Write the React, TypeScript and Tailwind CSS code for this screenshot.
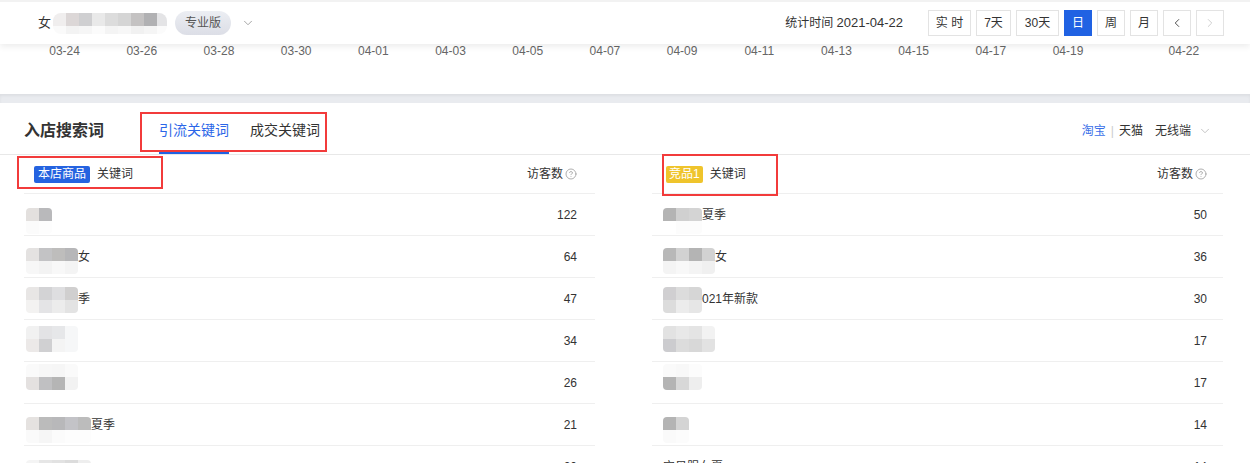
import { ChevronDown, ChevronLeft, ChevronRight, CircleHelp } from "lucide-react";

type Row = {
  top: string[];
  bottom: string[];
  offset: string;
  text: string;
  value: number;
};

const axisDates = [
  "03-24", "03-26", "03-28", "03-30", "04-01", "04-03", "04-05",
  "04-07", "04-09", "04-11", "04-13", "04-15", "04-17", "04-19",
];

const leftRows: Row[] = [
  { top: ["bg-[#e3e0de]", "bg-[#b9b9bb]"], bottom: ["bg-[#fbfbfb]", "bg-[#fdfdfd]"], offset: "mt-[14px]", text: "", value: 122 },
  { top: ["bg-[#e4e2e1]", "bg-[#c3c3c5]", "bg-[#bebdbc]", "bg-[#b6b6b8]"], bottom: ["bg-[#f7f7f7]", "bg-[#f3f3f3]", "bg-[#f8f8f8]", "bg-[#f4f4f4]"], offset: "mt-[12px]", text: "女", value: 64 },
  { top: ["bg-[#e8e6e5]", "bg-[#d3d3d5]", "bg-[#dedee0]", "bg-[#d0cfcf]"], bottom: ["bg-[#f3f2f1]", "bg-[#e4e4e6]", "bg-[#ececec]", "bg-[#e3e3e3]"], offset: "mt-[9px]", text: "季", value: 47 },
  { top: ["bg-[#f1f1f1]", "bg-[#e3e3e5]", "bg-[#e6e7e9]", "bg-[#f6f7f8]"], bottom: ["bg-[#ece9e8]", "bg-[#d0d0d2]", "bg-[#f4f4f4]", "bg-[#f6f7f8]"], offset: "mt-[6px]", text: "", value: 34 },
  { top: ["bg-[#fafafa]", "bg-[#f7f7f7]", "bg-[#f6f6f6]", "bg-[#fafafa]"], bottom: ["bg-[#e4e1e0]", "bg-[#c0c0c2]", "bg-[#b5b5b5]", "bg-[#f2f2f2]"], offset: "mt-[2px]", text: "", value: 26 },
  { top: ["bg-[#e5e2e0]", "bg-[#bbbbbb]", "bg-[#b8b8ba]", "bg-[#c3c3c7]", "bg-[#bcbcbc]"], bottom: ["bg-[#fafafa]", "bg-[#f6f6f6]", "bg-[#fbfbfb]", "bg-[#fdfdfd]", "bg-[#fdfdfd]"], offset: "mt-[13px]", text: "夏季", value: 21 },
  { top: ["bg-[#f4f4f4]", "bg-[#e6e6e6]", "bg-[#e2e2e2]", "bg-[#dcdcdc]", "bg-[#eeeeee]"], bottom: ["bg-[#fafafa]", "bg-[#f6f6f6]", "bg-[#f8f8f8]", "bg-[#fbfbfb]", "bg-[#fdfdfd]"], offset: "mt-[14px]", text: "", value: 20 },
];

const rightRows: Row[] = [
  { top: ["bg-[#b4b4b4]", "bg-[#d0d0d0]", "bg-[#d4d4d4]"], bottom: ["bg-[#ffffff]", "bg-[#fcfcfc]", "bg-[#fcfcfc]"], offset: "mt-[14px]", text: "夏季", value: 50 },
  { top: ["bg-[#b8b8b8]", "bg-[#d2d2d2]", "bg-[#b4b4b4]", "bg-[#d2d2d2]"], bottom: ["bg-[#f4f4f4]", "bg-[#f8f8f8]", "bg-[#f4f4f4]", "bg-[#f0f0f0]"], offset: "mt-[12px]", text: "女", value: 36 },
  { top: ["bg-[#d0cfd1]", "bg-[#dcdcdc]", "bg-[#d6d6d6]"], bottom: ["bg-[#dcdcdc]", "bg-[#ececec]", "bg-[#e6e6e6]"], offset: "mt-[9px]", text: "021年新款", value: 30 },
  { top: ["bg-[#e2e2e2]", "bg-[#e8e8e8]", "bg-[#e4e4e4]", "bg-[#f2f2f2]"], bottom: ["bg-[#cccccf]", "bg-[#dcdcdc]", "bg-[#d8d8d8]", "bg-[#e2e2e2]"], offset: "mt-[6px]", text: "", value: 17 },
  { top: ["bg-[#fafafa]", "bg-[#f8f8f8]", "bg-[#fcfcfc]"], bottom: ["bg-[#b4b4b4]", "bg-[#d8d8d8]", "bg-[#eeeeee]"], offset: "mt-[2px]", text: "", value: 17 },
  { top: ["bg-[#b4b4b4]", "bg-[#d4d4d4]"], bottom: ["bg-[#fafafa]", "bg-[#fcfcfc]"], offset: "mt-[13px]", text: "", value: 14 },
  { top: [], bottom: [], offset: "mt-[14px]", text: "宝贝服女夏", value: 14 },
];

function Pixelated({ top, bottom, offset }: { top: string[]; bottom: string[]; offset: string }) {
  if (top.length === 0) return null;
  return (
    <div className={`self-start ${offset} flex flex-col overflow-hidden rounded-[4px]`}>
      <div className="flex">
        {top.map((c, i) => (
          <span key={i} className={`h-[13px] w-[13px] ${c}`} />
        ))}
      </div>
      <div className="flex">
        {bottom.map((c, i) => (
          <span key={i} className={`h-[13px] w-[13px] ${c}`} />
        ))}
      </div>
    </div>
  );
}

function KeywordTable({
  rows,
  badge,
  left,
}: {
  rows: Row[];
  badge: React.ReactNode;
  left: boolean;
}) {
  return (
    <div className="flex w-[571px] flex-col">
      <div className={`relative flex h-[39px] items-center border-b border-[#efefef] ${left ? "pl-[10px] pr-[18px]" : "pl-[14px] pr-[16px]"}`}>
        {badge}
        <span className="ml-[7px] text-[12px] text-[#333]">关键词</span>
        <span className="ml-auto flex items-center text-[12px] text-[#333]">
          访客数
          <CircleHelp className="ml-[2px] h-[12px] w-[12px] text-[#9a9a9a]" strokeWidth={1.6} />
        </span>
        {left ? (
          <div className="absolute left-[-7px] top-[1px] h-[33px] w-[146px] border-2 border-[#f23b3b]" />
        ) : (
          <div className="absolute left-[10px] top-[-1px] h-[42px] w-[116px] border-2 border-[#f23b3b]" />
        )}
      </div>
      {rows.map((r, i) => (
        <div
          key={i}
          className={`flex h-[42px] items-center border-b border-[#efefef] text-[12px] text-[#333] ${left ? "pl-[2px] pr-[18px]" : "pl-[11px] pr-[16px]"}`}
        >
          <div className="flex h-full items-center">
            <Pixelated top={r.top} bottom={r.bottom} offset={r.offset} />
            <span>{r.text}</span>
          </div>
          <span className="ml-auto">{r.value}</span>
        </div>
      ))}
    </div>
  );
}

export default function App() {
  return (
    <div className="h-[463px] w-[1250px] overflow-hidden bg-white font-[family-name:'Liberation_Sans','Noto_Sans_CJK_SC',sans-serif]">
      {/* top bar */}
      <div className="relative z-10 flex h-[44px] items-center border-t-2 border-[#f2f2f2] bg-white pl-[38px] pr-[26px] shadow-[0_3px_6px_rgba(0,0,0,0.07)]">
        <span className="text-[13px] text-[#333]">女</span>
        <div className="ml-[2px] flex flex-col overflow-hidden rounded-[8px]">
          <div className="flex">
            <span className="h-[13px] w-[13px] bg-[#f0eeee]" />
            <span className="h-[13px] w-[13px] bg-[#dcd7d7]" />
            <span className="h-[13px] w-[13px] bg-[#cfcfd1]" />
            <span className="h-[13px] w-[13px] bg-[#e9e9e9]" />
            <span className="h-[13px] w-[13px] bg-[#dcdcdc]" />
            <span className="h-[13px] w-[13px] bg-[#d5d5d5]" />
            <span className="h-[13px] w-[13px] bg-[#c4c2c2]" />
            <span className="h-[13px] w-[13px] bg-[#b1b1b3]" />
            <span className="h-[13px] w-[10px] bg-[#e4e4e6]" />
          </div>
          <div className="flex">
            <span className="h-[8px] w-[13px] bg-[#fafafa]" />
            <span className="h-[8px] w-[13px] bg-[#f3f3f3]" />
            <span className="h-[8px] w-[13px] bg-[#f6f6f6]" />
            <span className="h-[8px] w-[13px] bg-[#fbfbfb]" />
            <span className="h-[8px] w-[13px] bg-[#f4f4f4]" />
            <span className="h-[8px] w-[13px] bg-[#f7f7f7]" />
            <span className="h-[8px] w-[13px] bg-[#f1f1f1]" />
            <span className="h-[8px] w-[13px] bg-[#f5f5f5]" />
            <span className="h-[8px] w-[10px] bg-[#fbfbfb]" />
          </div>
        </div>
        <span className="ml-[8px] flex h-[24px] w-[56px] items-center justify-center rounded-full bg-gradient-to-b from-[#eceef3] to-[#dcdee6] text-[12px] text-[#555]">
          专业版
        </span>
        <ChevronDown className="ml-[10px] h-[14px] w-[14px] text-[#999]" strokeWidth={1.5} />

        <div className="ml-auto flex items-center">
          <span className="mr-[25px] text-[12px] text-[#333]">
            统计时间 <span className="text-[13px]">2021-04-22</span>
          </span>
          <div className="flex gap-[5px] text-[12px] text-[#333]">
            <button className="h-[26px] w-[43px] border border-[#e3e3e3] bg-white">实 时</button>
            <button className="h-[26px] w-[35px] border border-[#e3e3e3] bg-white">7天</button>
            <button className="h-[26px] w-[43px] border border-[#e3e3e3] bg-white">30天</button>
            <button className="h-[26px] w-[28px] border border-[#2062e3] bg-[#2062e3] text-white">日</button>
            <button className="h-[26px] w-[28px] border border-[#e3e3e3] bg-white">周</button>
            <button className="h-[26px] w-[28px] border border-[#e3e3e3] bg-white">月</button>
            <button className="flex h-[26px] w-[28px] items-center justify-center border border-[#e3e3e3] bg-white">
              <ChevronLeft className="h-[14px] w-[14px] text-[#444]" strokeWidth={1.6} />
            </button>
            <button className="flex h-[26px] w-[28px] items-center justify-center border border-[#e3e3e3] bg-white">
              <ChevronRight className="h-[14px] w-[14px] text-[#ccc]" strokeWidth={1.6} />
            </button>
          </div>
        </div>
      </div>

      {/* chart axis */}
      <div className="h-[50px] bg-white">
        <div className="flex pl-[26px] text-[12px] leading-[14px] text-[#666]">
          {axisDates.map((d) => (
            <span key={d} className="w-[77.2px] shrink-0 text-center">
              {d}
            </span>
          ))}
          <span className="ml-[38.6px] w-[77.2px] shrink-0 text-center">04-22</span>
        </div>
      </div>
      <div className="h-[9px] bg-[#e9ebef] shadow-[inset_0_2px_3px_rgba(0,0,0,0.05)]" />

      {/* search keyword section */}
      <div className="bg-white">
        <div className="flex h-[52px] items-stretch border-b border-[#e8e8e8]">
          <div className="flex items-center pl-[24px] pt-[5px] text-[16px] font-bold text-[#333]">入店搜索词</div>
          <div className="relative ml-[55px] flex gap-[21px] text-[14px]">
            <div className="flex items-center border-b-2 border-[#2062e3] pt-[5px] text-[#2b66e8]">引流关键词</div>
            <div className="flex items-center border-b-2 border-transparent pt-[5px] text-[#333]">成交关键词</div>
            <div className="absolute left-[-19px] top-[9px] h-[40px] w-[187px] border-2 border-[#f23b3b]" />
          </div>
          <div className="ml-auto flex items-center pr-[38px] pt-[5px] text-[12px]">
            <span className="text-[#3b6fe8]">淘宝</span>
            <span className="mx-[5px] text-[#ccc]">|</span>
            <span className="text-[#333]">天猫</span>
            <span className="ml-[12px] text-[#333]">无线端</span>
            <ChevronDown className="ml-[7px] h-[14px] w-[14px] text-[#bbb]" strokeWidth={1.5} />
          </div>
        </div>

        <div className="flex pl-[24px]">
          <KeywordTable
            rows={leftRows}
            left
            badge={
              <span className="flex h-[17px] items-center rounded-[2px] bg-[#2563e0] px-[4px] text-[12px] text-white">
                本店商品
              </span>
            }
          />
          <div className="ml-[57px]">
            <KeywordTable
              rows={rightRows}
              left={false}
              badge={
                <span className="flex h-[17px] items-center rounded-[2px] bg-[#efc42c] px-[3px] text-[12px] text-white">
                  竞品1
                </span>
              }
            />
          </div>
        </div>
      </div>
    </div>
  );
}
